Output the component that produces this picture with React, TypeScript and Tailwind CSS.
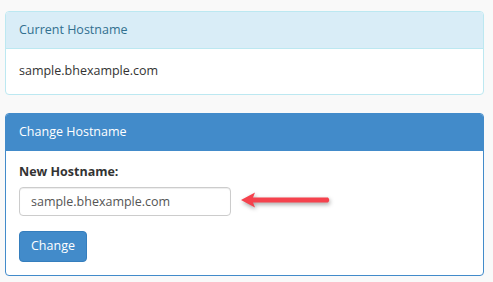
export default function App() {
  return (
    <main
      className="min-h-screen bg-[#f9f9f9] pl-[5px] pr-[9px] pt-[11px] text-[12.5px] text-[#333]"
      style={{ fontFamily: '"Open Sans", "Liberation Sans", sans-serif' }}
    >
      <div className="rounded-[4px] border border-[#bce8f1] bg-white">
        <div className="flex h-[37px] items-center rounded-t-[3px] border-b border-[#bce8f1] bg-[#d9edf7] px-[13px] text-[#31708f]">
          Current Hostname
        </div>
        <div className="flex h-[45px] items-center px-[13px]">sample.bhexample.com</div>
      </div>

      <div className="mt-[18px] rounded-[4px] border border-[#428bca] bg-white">
        <div className="flex h-[37px] items-center rounded-t-[3px] bg-[#428bca] px-[13px] text-white">
          Change Hostname
        </div>
        <div className="px-[13px] pb-[13px] pt-[12px]">
          <p className="font-bold leading-[18px]">New Hostname:</p>
          <div className="mt-[6px] flex items-center">
            <input
              readOnly
              value="sample.bhexample.com"
              className="h-[29px] w-[212px] rounded-[4px] border border-[#ccc] bg-white px-[11px] text-[12.5px] text-[#555] shadow-[inset_0_1px_1px_rgba(0,0,0,0.075)] outline-none"
            />
            <svg
              width="92"
              height="20"
              viewBox="0 0 92 20"
              className="ml-[9px] drop-shadow-[1px_2px_2px_rgba(0,0,0,0.35)]"
            >
              <path d="M1 8 L15 0.5 L13 5.5 L88 5.5 Q90.5 8 88 10.5 L13 10.5 L15 15.5 Z" fill="#f5424d" />
            </svg>
          </div>
          <button className="mt-[15px] h-[31px] rounded-[4px] border border-[#357ebd] bg-[#428bca] px-[11px] text-[12.5px] text-white">
            Change
          </button>
        </div>
      </div>
    </main>
  );
}
